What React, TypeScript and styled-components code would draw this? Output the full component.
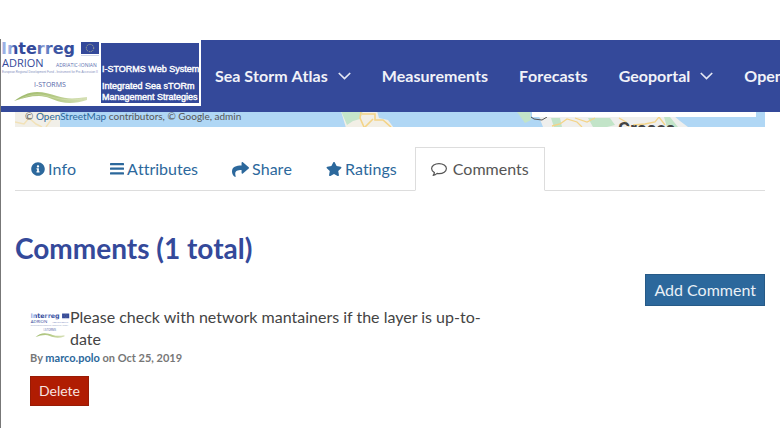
import React from "react";
import styled, { createGlobalStyle } from "styled-components";
import { FaInfoCircle, FaShare, FaStar } from "react-icons/fa";

const GlobalStyle = createGlobalStyle`
  *, *::before, *::after { box-sizing: border-box; }
  body { margin: 0; background: #fff; overflow-x: hidden; color: #444; font: 16px/22px Lato, "Liberation Sans", sans-serif; }
  a { color: #2c689c; text-decoration: none; }
  button { font: inherit; cursor: pointer; }
`;

const Page = styled.div`
  min-height: 100vh;
  padding-top: 40px;
  border-left: 1px solid #777;
  border-image: linear-gradient(#fff 40px, #777 40px) 1;
  overflow: hidden;
`;

const Header = styled.header`
  display: flex;
  height: 72px;
  margin-left: -1px;
  background: #34499a;
`;

const Brand = styled.a`
  display: flex;
  flex: none;
  align-self: flex-start;
  width: 201px;
  height: 66px;
  padding: 3px 3px 3px 0;
  background: #fff;
`;

const BrandMark = styled.svg`
  display: block;
  flex: none;
  width: 101px;
  height: 66px;
  margin-top: -3px;
`;

const BrandText = styled.span`
  display: flex;
  flex: 1;
  flex-direction: column;
  justify-content: flex-end;
  padding-left: 1px;
  background: #34499a;
  color: #fff;
  font: 9px/11px "Liberation Sans", Arial, sans-serif;
  -webkit-text-stroke: 0.4px #fff;
  white-space: nowrap;
`;

const BrandName = styled.span`
  padding-bottom: 6px;
`;

const Nav = styled.nav`
  display: flex;
  align-items: center;
  gap: 31px;
  margin-left: 14px;
`;

const NavLink = styled.a`
  display: flex;
  align-items: center;
  gap: 10px;
  color: #f1f2f8;
  font-weight: 700;
  font-kerning: none;
  font-variant-ligatures: none;
  white-space: nowrap;
`;

const MapStrip = styled.div`
  position: relative;
  height: 15px;
  margin: 0 15px 0 14px;
  overflow: hidden;
  background: #b0d7f5;
`;

const MapDrawing = styled.svg`
  display: block;
  width: 100%;
  height: 15px;
`;

const Attribution = styled.div`
  position: absolute;
  left: 10px;
  top: -4px;
  color: #555;
  font-size: 10px;
  line-height: 16px;
  white-space: nowrap;
`;

const Content = styled.main`
  padding: 20px 15px 0 14px;
`;

const Tabs = styled.div`
  display: flex;
  height: 44px;
  border-bottom: 1px solid #ddd;
`;

const Tab = styled.button<{ $active?: boolean }>`
  display: flex;
  align-items: center;
  gap: ${(p) => (p.$active ? 6 : 3)}px;
  height: 44px;
  margin: 0 2px 0 0;
  padding: 0 15px;
  border: 1px solid ${(p) => (p.$active ? "#ddd" : "transparent")};
  border-bottom-color: ${(p) => (p.$active ? "#fff" : "transparent")};
  background: ${(p) => (p.$active ? "#fff" : "transparent")};
  color: ${(p) => (p.$active ? "#555" : "#2c689c")};
  font-kerning: none;
  font-variant-ligatures: none;
  white-space: nowrap;
  svg { flex: none; }
`;

const Title = styled.h2`
  margin: 42px 0 10px;
  color: #34499a;
  font-size: 28px;
  font-weight: 700;
  line-height: 31px;
`;

const Actions = styled.div`
  display: flex;
  justify-content: flex-end;
`;

const AddButton = styled.button`
  height: 32px;
  padding: 0 8px;
  border: 1px solid #265a87;
  background: #2c689c;
  color: #e9f0f6;
`;

const Comment = styled.article`
  width: 64%;
  padding: 0 0 0 15px;
`;

const CommentBody = styled.div`
  display: flex;
  align-items: flex-start;
`;

const Avatar = styled.svg`
  flex: none;
  width: 40px;
  height: 40px;
`;

const CommentText = styled.p`
  margin: 0;
`;

const Byline = styled.p`
  margin: 0 0 10px;
  color: #777;
  font-size: 11px;
  font-weight: 700;
  line-height: 16px;
`;

const DeleteButton = styled.button`
  height: 30px;
  padding: 0 8px;
  border: 1px solid #981b05;
  background: #b01c02;
  color: #f8e4e0;
  font-size: 14px;
`;

const Chevron = () => (
  <svg width="13" height="8" viewBox="0 0 13 8" fill="none" stroke="#e4e7f3" strokeWidth="1.7" aria-hidden="true">
    <path d="M.8 1 6.5 6.6 12.2 1" />
  </svg>
);

const BarsIcon = () => (
  <svg width="14" height="14" viewBox="0 0 14 14" fill="currentColor" aria-hidden="true">
    <rect y="1" width="14" height="2.2" rx=".5" />
    <rect y="5.6" width="14" height="2.2" rx=".5" />
    <rect y="10.2" width="14" height="2.2" rx=".5" />
  </svg>
);

const BubbleIcon = () => (
  <svg width="16" height="16" viewBox="0 0 16 16" fill="none" stroke="currentColor" strokeWidth="1.2" strokeLinejoin="round" aria-hidden="true">
    <path d="M8 2.6c4.1 0 7.4 2.2 7.4 5s-3.3 5-7.4 5c-.7 0-1.3-.1-1.9-.2-1.1 1-2.4 1.7-4 2 .8-.8 1.2-1.7 1.3-2.8C1.7 10.7.6 9.2.6 7.6c0-2.8 3.3-5 7.4-5Z" />
  </svg>
);

const MarkArt = () => (
  <>
    <defs>
      <linearGradient id="word" x1="0" x2="1">
        <stop offset="0" stopColor="#9cb0e3" />
        <stop offset=".12" stopColor="#9cb0e3" />
        <stop offset=".2" stopColor="#34499a" />
        <stop offset=".48" stopColor="#34499a" />
        <stop offset=".58" stopColor="#91a7dd" />
        <stop offset=".68" stopColor="#4058a5" />
        <stop offset="1" stopColor="#34499a" />
      </linearGradient>
      <linearGradient id="wave" x1="0" x2="1">
        <stop offset="0" stopColor="#9cb86a" />
        <stop offset=".55" stopColor="#b5ca85" />
        <stop offset="1" stopColor="#d6e0b6" />
      </linearGradient>
    </defs>
    <text x="1" y="14" fill="url(#word)" fontFamily="DejaVu Sans, sans-serif" fontSize="16" fontWeight="700">Interreg</text>
    <rect x="81" y="2" width="18" height="12" fill="#34499a" />
    <circle cx="90" cy="8" r="3.7" fill="none" stroke="#b6ba91" strokeWidth="1" strokeDasharray="1 .94" />
    <path d="M81 15.5H99" stroke="#b5bddb" strokeWidth=".6" />
    <text x="2" y="27" fill="#34499a" fontFamily="Open Sans, sans-serif" fontSize="11">ADRION</text>
    <text x="56" y="27" fill="#6172b1" fontFamily="Open Sans, sans-serif" fontSize="5">ADRIATIC-IONIAN</text>
    <text x="2" y="33" fill="#8490bd" fontFamily="Liberation Sans Narrow, Liberation Sans, sans-serif" fontSize="3">European Regional Development Fund - Instrument for Pre-Accession II</text>
    <text x="34" y="47" fill="#5365a8" fontFamily="Open Sans, sans-serif" fontSize="7">I-STORMS</text>
    <path d="M14 61c7-5 14-9 23-9 7 0 13 2 20 4 9 3 17 3 30 1v3c-9 3-18 4-26 2-8-2-14-6-22-6-9 0-16 2-25 5Z" fill="url(#wave)" />
    <path d="M20 59c10-5 18-5 27-3 12 3 20 5 35 3" fill="none" stroke="#e3ebc6" strokeWidth=".4" />
  </>
);

const Coast = () => (
  <>
    <path d="M326-1h36l2 7 9 2 6 8h-48Z" fill="#f2efe6" />
    <path d="m326-1 6 14 6-4 7-2 3-8Z" fill="#c4e5ca" />
    <path d="m346 0-1 6 4 9M347 2h13v6h8l8 7M358 7l-8 8" fill="none" stroke="#f4d487" strokeWidth="1.6" />
    <path d="M515-1h135l8 4 7 6 8 6H527l-2-9-5-4Z" fill="#efefed" />
    <path d="m502 0 13 0 1 8-6 3Zm34 6 9 0 2 9h-8Zm37 0h22l5 7-8 2h-14Zm76-1h6l8 10h-11Z" fill="#c2e4c8" />
    <path d="m537 14 8-2 7-5 10 3 5 5M560 6l12 4 8-4M604 6l7 4 3 5M618 13l12-1 10-2 4-5 6 8" fill="none" stroke="#f4d487" strokeWidth="1.3" />
    <path d="m516 5 3 2 8 1 5-3" fill="none" stroke="#555" />
    <path d="M516 8l10 2 2 5h-13Z" fill="#b0d7f5" />
    <text x="603" y="23" fill="#444" fontFamily="Roboto, sans-serif" fontSize="18" fontWeight="700">Greece</text>
    <path d="M517-1h224v6H517Z" fill="#fff" />
  </>
);

export default function App() {
  return (
    <Page>
      <GlobalStyle />
      <Header>
        <Brand href="#" aria-label="I-STORMS Web System">
          <BrandMark viewBox="0 0 101 66"><MarkArt /></BrandMark>
          <BrandText>
            <BrandName>I-STORMS Web System</BrandName>
            <span>Integrated Sea sTORm</span>
            <span>Management Strategies</span>
          </BrandText>
        </Brand>
        <Nav>
          <NavLink href="#">Sea Storm Atlas <Chevron /></NavLink>
          <NavLink href="#">Measurements</NavLink>
          <NavLink href="#">Forecasts</NavLink>
          <NavLink href="#">Geoportal <Chevron /></NavLink>
          <NavLink href="#">Open</NavLink>
        </Nav>
      </Header>
      <MapStrip>
        <MapDrawing viewBox="0 0 750 15" preserveAspectRatio="xMinYMin slice" aria-hidden="true">
          <path d="M0 0H45V15H0Z" fill="#f1efe8" />
          <path d="m0 10 9 2 5-6 7 6 6 3M25 0l11 8-5 7" fill="none" stroke="#f2e2b8" strokeWidth="1.5" />
          <Coast />
        </MapDrawing>
        <Attribution>© <a href="#">OpenStreetMap</a> contributors, © Google, admin</Attribution>
      </MapStrip>
      <Content>
        <Tabs role="tablist">
          <Tab role="tab"><FaInfoCircle size={14} />Info</Tab>
          <Tab role="tab"><BarsIcon />Attributes</Tab>
          <Tab role="tab"><FaShare size={17} />Share</Tab>
          <Tab role="tab"><FaStar size={16} />Ratings</Tab>
          <Tab role="tab" aria-selected="true" $active><BubbleIcon />Comments</Tab>
        </Tabs>
        <Title>Comments (1 total)</Title>
        <Actions><AddButton>Add Comment</AddButton></Actions>
        <Comment>
          <CommentBody>
            <Avatar viewBox="0 -17 101 101" aria-hidden="true"><MarkArt /></Avatar>
            <CommentText>Please check with network mantainers if the layer is up-to-date</CommentText>
          </CommentBody>
          <Byline>By <a href="#">marco.polo</a> on Oct 25, 2019</Byline>
          <DeleteButton>Delete</DeleteButton>
        </Comment>
      </Content>
    </Page>
  );
}
